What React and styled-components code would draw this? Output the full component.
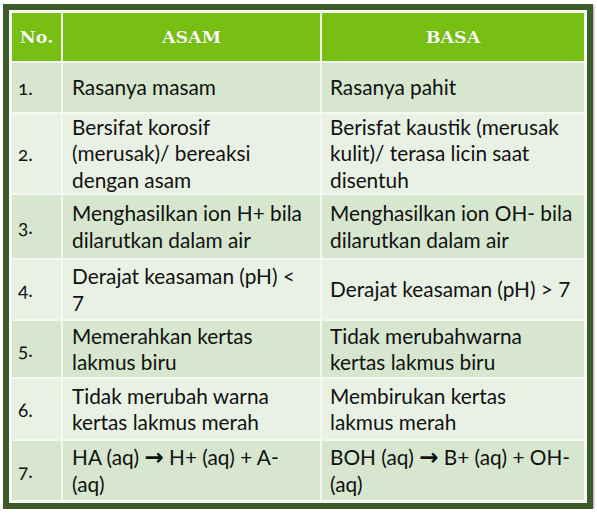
import React from "react";
import styled, { createGlobalStyle } from "styled-components";

const Global = createGlobalStyle`
  html, body { margin: 0; padding: 0; background: #ffffff; }
  body { padding: 4px 0 0 3px; }
`;

const Frame = styled.div`
  display: inline-block;
  border: 6px solid #3d5a2b;
  padding: 3px;
  background: #f7faf4;
  box-shadow: 1px 1px 2px rgba(0, 0, 0, 0.35);
`;

const Table = styled.div`
  display: grid;
  grid-template-columns: 49px 257px 262px;
  grid-template-rows: 48px 49px 79px 63px 59px 56px 60px 59px;
  gap: 2px;
  background: #f4f8f0;
  font-family: Lato, "Open Sans", sans-serif;
`;

const Head = styled.div`
  background: #78bf14;
  color: #f7fbee;
  font-family: "DejaVu Serif", serif;
  font-weight: bold;
  font-size: 17.5px;
  display: flex;
  align-items: center;
  justify-content: center;
  text-shadow: 0 0 1px rgba(60, 90, 20, 0.4);
`;

const Num = styled.div`
  background: ${(p) => (p.$alt ? "#e9f1e4" : "#d6e6cf")};
  color: #111;
  font-size: 19px;
  font-feature-settings: "onum";
  display: flex;
  align-items: center;
  padding-left: 6px;
`;

const Cell = styled.div`
  background: ${(p) => (p.$alt ? "#e9f1e4" : "#d6e6cf")};
  color: #111;
  font-size: 20.8px;
  line-height: 26.5px;
  display: flex;
  flex-direction: column;
  justify-content: center;
  padding-left: ${(p) => p.$pad}px;
`;

const Line = styled.span`
  display: block;
  white-space: nowrap;
`;

const Arrow = styled.span`
  font-family: "DejaVu Sans", sans-serif;
  font-weight: bold;
  font-size: 23px;
  line-height: 1;
`;

const renderLine = (t) => {
  const parts = t.split("\u2192");
  if (parts.length === 1) return t;
  return (
    <>
      {parts[0]}
      <Arrow>{"\u2192"}</Arrow>
      {parts[1]}
    </>
  );
};

const rows = [
  ["1.", ["Rasanya masam"], ["Rasanya pahit"]],
  [
    "2.",
    ["Bersifat korosif", "(merusak)/ bereaksi", "dengan asam"],
    ["Berisfat kaustik (merusak", "kulit)/ terasa licin saat", "disentuh"],
  ],
  [
    "3.",
    ["Menghasilkan ion H+ bila", "dilarutkan dalam air"],
    ["Menghasilkan ion OH- bila", "dilarutkan dalam air"],
  ],
  ["4.", ["Derajat keasaman (pH) <", "7"], ["Derajat keasaman (pH) > 7"]],
  ["5.", ["Memerahkan kertas", "lakmus biru"], ["Tidak merubahwarna", "kertas lakmus biru"]],
  ["6.", ["Tidak merubah warna", "kertas lakmus merah"], ["Membirukan kertas", "lakmus merah"]],
  [
    "7.",
    ["HA (aq) \u2192 H+ (aq) + A-", "(aq)"],
    ["BOH (aq) \u2192 B+ (aq) + OH-", "(aq)"],
  ],
];

export default function App() {
  return (
    <>
      <Global />
      <Frame>
        <Table>
          <Head>No.</Head>
          <Head>ASAM</Head>
          <Head>BASA</Head>
          {rows.map(([n, a, b], i) => (
            <React.Fragment key={n}>
              <Num $alt={i % 2 === 1}>{n}</Num>
              <Cell $alt={i % 2 === 1} $pad={9}>
                {a.map((t) => (
                  <Line key={t}>{renderLine(t)}</Line>
                ))}
              </Cell>
              <Cell $alt={i % 2 === 1} $pad={8}>
                {b.map((t) => (
                  <Line key={t}>{renderLine(t)}</Line>
                ))}
              </Cell>
            </React.Fragment>
          ))}
        </Table>
      </Frame>
    </>
  );
}
